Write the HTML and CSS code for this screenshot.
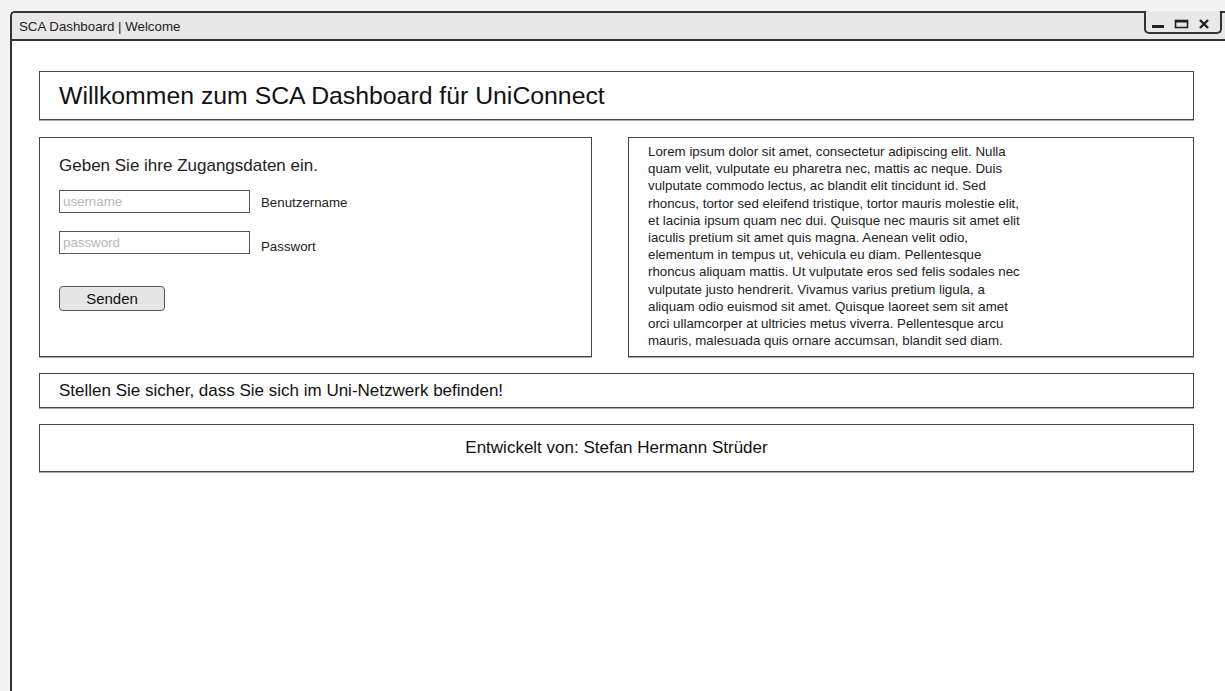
FILE: index.html
```html
<!DOCTYPE html>
<html lang="de">
<head>
<meta charset="utf-8">
<title>SCA Dashboard | Welcome</title>
<link rel="stylesheet" href="styles.css">
</head>
<body>
<div class="desk">
  <div class="window">
    <div class="titlebar">
      <span class="title">SCA Dashboard | Welcome</span>
      <div class="controls">
        <svg class="ctl" width="13" height="10" viewBox="0 0 13 10"><rect x="0" y="6" width="12" height="3" fill="#222"/></svg>
        <svg class="ctl" width="15" height="10" viewBox="0 0 15 10"><rect x="1.5" y="1.5" width="12" height="7" fill="none" stroke="#222" stroke-width="1.6"/><rect x="1.5" y="1.5" width="12" height="2" fill="#222"/></svg>
        <svg class="ctl" width="12" height="10" viewBox="0 0 12 10"><path d="M2 1 L10 9 M10 1 L2 9" stroke="#222" stroke-width="2.4"/></svg>
      </div>
    </div>
    <main class="content">
      <header class="box headline">
        <h1>Willkommen zum SCA Dashboard für UniConnect</h1>
      </header>
      <div class="row">
        <section class="box login">
          <h2>Geben Sie ihre Zugangsdaten ein.</h2>
          <div class="field">
            <input class="input" type="text" placeholder="username">
            <span class="label">Benutzername</span>
          </div>
          <div class="field field-pw">
            <input class="input" type="password" placeholder="password">
            <span class="label label-pw">Passwort</span>
          </div>
          <button class="btn" type="button">Senden</button>
        </section>
        <section class="box info">
          <p>Lorem ipsum dolor sit amet, consectetur adipiscing elit. Nulla quam velit, vulputate eu pharetra nec, mattis ac neque. Duis vulputate commodo lectus, ac blandit elit tincidunt id. Sed rhoncus, tortor sed eleifend tristique, tortor mauris molestie elit, et lacinia ipsum quam nec dui. Quisque nec mauris sit amet elit iaculis pretium sit amet quis magna. Aenean velit odio, elementum in tempus ut, vehicula eu diam. Pellentesque rhoncus aliquam mattis. Ut vulputate eros sed felis sodales nec vulputate justo hendrerit. Vivamus varius pretium ligula, a aliquam odio euismod sit amet. Quisque laoreet sem sit amet orci ullamcorper at ultricies metus viverra. Pellentesque arcu mauris, malesuada quis ornare accumsan, blandit sed diam.</p>
        </section>
      </div>
      <div class="box notice">Stellen Sie sicher, dass Sie sich im Uni-Netzwerk befinden!</div>
      <footer class="box footer">Entwickelt von: Stefan Hermann Strüder</footer>
    </main>
  </div>
</div>
</body>
</html>
```

FILE: styles.css
```css
* { box-sizing: border-box; }

html, body {
  margin: 0;
  height: 100%;
  overflow: hidden;
}

body {
  background: #f4f4f4;
  font-family: "Liberation Sans", Arial, sans-serif;
  color: #1a1a1a;
}

.desk {
  height: 100%;
  padding: 11px 0 0 10px;
}

.window {
  position: relative;
  height: 100%;
  background: #fff;
  border-left: 2px solid #333;
  border-top: 2px solid #333;
  border-top-left-radius: 5px;
}

.titlebar {
  height: 28px;
  background: #e8e8e8;
  border-bottom: 2px solid #333;
  border-top-left-radius: 3px;
  display: flex;
  align-items: center;
  padding-left: 7px;
}

.title {
  font-size: 13.3px;
  color: #222;
}

/* minimise / maximise / close tab hanging from the top edge */
.controls {
  position: absolute;
  top: -2px;
  right: 3px;
  width: 78px;
  height: 23px;
  border: 2px solid #333;
  border-top: none;
  border-bottom-left-radius: 5px;
  border-bottom-right-radius: 5px;
  background: #e8e8e8;
  display: flex;
  align-items: center;
  justify-content: space-between;
  padding: 4px 10px 0 6px;
}

.content {
  padding: 30px 31px 0 27px;
  display: flex;
  flex-direction: column;
  gap: 16px;
}

.box {
  border: 1px solid #444;
  box-shadow: 0 1px 0 #aaa;
}

.headline {
  height: 49px;
  display: flex;
  align-items: center;
  padding-left: 19px;
  margin-bottom: 1px;
}

h1 {
  margin: 0;
  font-size: 24.8px;
  font-weight: normal;
  color: #111;
}

.row {
  display: flex;
  gap: 36px;
  height: 220px;
}

.login {
  flex: 0 0 553px;
  padding: 18px 19px 0 19px;
}

h2 {
  margin: 0 0 14px;
  font-size: 17px;
  font-weight: normal;
  color: #222;
}

.field {
  display: flex;
  align-items: center;
  gap: 11px;
  margin-bottom: 18px;
}

.field-pw {
  margin-bottom: 32px;
}

.input {
  width: 191px;
  height: 23px;
  border: 1px solid #555;
  border-radius: 0;
  padding: 0 3px;
  font-family: "Liberation Sans", Arial, sans-serif;
  font-size: 13.3px;
  color: #222;
  background: #fff;
  outline: none;
}

.input::placeholder { color: #b8b8b8; }

.label {
  font-size: 13.3px;
  color: #222;
  padding-top: 2px;
}

.label-pw {
  padding-top: 8px;
}

.btn {
  width: 106px;
  height: 25px;
  background: #e6e6e6;
  border: 1px solid #555;
  border-radius: 4px;
  font-family: "Liberation Sans", Arial, sans-serif;
  font-size: 15px;
  color: #111;
  padding: 0;
}

.info {
  flex: 1;
  padding: 5px 19px 0 19px;
}

.info p {
  margin: 0;
  width: 380px;
  font-size: 13.3px;
  line-height: 17.2px;
  color: #222;
}

.notice {
  height: 35px;
  display: flex;
  align-items: center;
  padding-left: 19px;
  font-size: 17px;
  color: #111;
}

.footer {
  height: 48px;
  display: flex;
  align-items: center;
  justify-content: center;
  font-size: 17px;
  color: #111;
}
```
